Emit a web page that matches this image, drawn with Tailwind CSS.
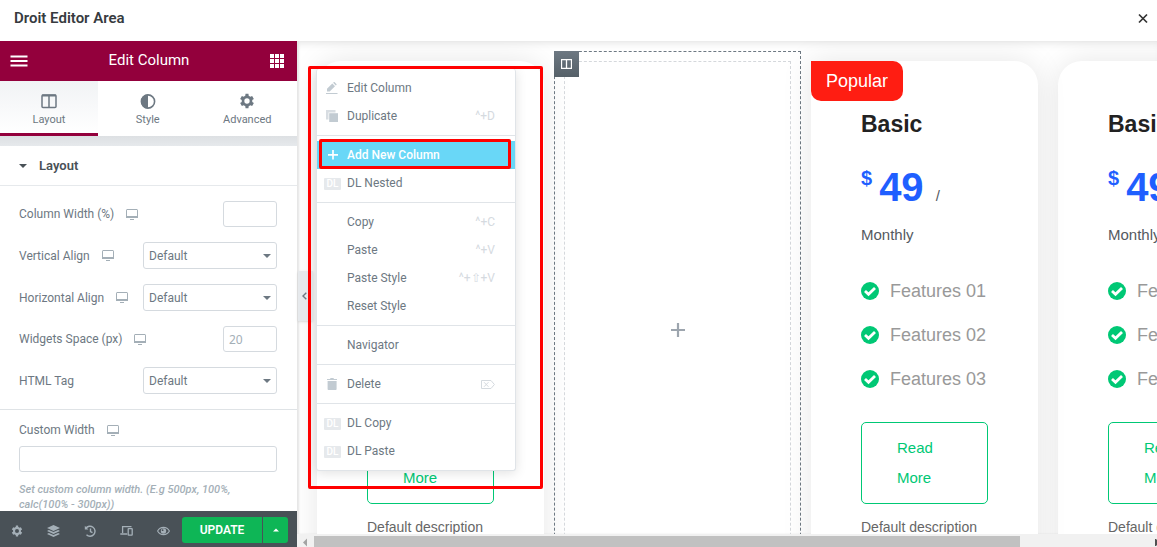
<!DOCTYPE html>
<html lang="en">
<head>
<meta charset="utf-8">
<meta name="viewport" content="width=device-width, initial-scale=1">
<title>Droit Editor Area</title>
<script src="https://cdn.jsdelivr.net/npm/@tailwindcss/browser@4"></script>
</head>
<body class="h-screen overflow-hidden bg-white font-['Roboto',sans-serif] text-xs text-[#6d7882]">
<svg class="hidden">
  <symbol id="monitor" viewBox="0 0 12 11"><path d="M1 .5h10a.6.6 0 0 1 .5.6v6.9H.5V1.100A.6.6 0 0 1 1 .5z" fill="none" stroke="currentColor"/><path d="M0 7h12v2H0zM4 10h4v1H4z" fill="currentColor"/></symbol>
  <symbol id="caret" viewBox="0 0 8 4"><path d="M0 0h8L4 4z" fill="currentColor"/></symbol>
  <symbol id="gear" viewBox="0 0 24 24"><path fill="currentColor" d="M19.800 13.500a8 8 0 0 0 0-3l2.500-1.500-2.600-4.600-2.700 1.200a8 8 0 0 0-2.500-1.500L14.200 1H9.800l-.4 3.100A8 8 0 0 0 7 5.600L4.300 4.400 1.700 9l2.500 1.500a8 8 0 0 0 0 3L1.700 15l2.600 4.600L7 18.400a8 8 0 0 0 2.500 1.500l.3 3.100h4.400l.3-3.100a8 8 0 0 0 2.500-1.500l2.700 1.200 2.600-4.600zM12 16a4 4 0 1 1 0-8 4 4 0 0 1 0 8z"/></symbol>
  <symbol id="check" viewBox="0 0 18 18"><circle cx="9" cy="9" r="9" fill="#00c875"/><path d="M4 9l3.500 3.300L14 6" fill="none" stroke="#fff" stroke-width="2.800"/></symbol>
</svg>

<div class="flex h-full flex-col">
  <header class="flex h-[41px] shrink-0 items-center justify-between pr-1 pl-3.5 pb-1">
    <h1 class="text-[15px] font-semibold text-[#373b3f]">Droit Editor Area</h1>
    <button type="button" aria-label="Close" class="p-1"><svg class="size-3" viewBox="0 0 12 12"><path d="M2 1.500l8 8M10 1.500l-8 8" stroke="#333" stroke-width="1.700"/></svg></button>
  </header>

  <div class="flex min-h-0 flex-1">
    <aside class="flex w-[297px] shrink-0 flex-col">
      <div class="flex h-10 shrink-0 items-center justify-between bg-[#93003c] pr-[13px] pl-2.5 text-white">
        <button type="button" aria-label="Menu"><svg class="h-3 w-[18px]" viewBox="0 0 18 12"><path d="M.5 1.500h17M.5 6h17M.5 10.500h17" stroke="#fff" stroke-width="2"/></svg></button>
        <h2 class="text-[15px]">Edit Column</h2>
        <button type="button" aria-label="Widgets"><svg class="size-3.5" viewBox="0 0 14 14" fill="#fff"><path d="M0 0h4v4H0zM5 0h4v4H5zM10 0h4v4h-4zM0 5h4v4H0zM5 5h4v4H5zM10 5h4v4h-4zM0 10h4v4H0zM5 10h4v4H5zM10 10h4v4h-4z"/></svg></button>
      </div>
      <nav class="grid h-[55px] shrink-0 grid-cols-[98px_1fr_1fr] text-[11px] leading-4">
        <button type="button" class="flex flex-col items-center gap-[3px] border-b-3 border-[#93003c] bg-gradient-to-b from-[#f1f3f5] to-white pt-3">
          <svg class="size-4" viewBox="0 0 16 16" fill="none" stroke="#6d7882"><rect x="1" y="2" width="14" height="12.500" rx="1" stroke-width="1.500"/><path d="M1 2.500h14" stroke-width="2"/><path d="M8 2v12.500" stroke-width="1.500"/></svg>Layout</button>
        <button type="button" class="flex flex-col items-center gap-[3px] pt-3">
          <svg class="size-4" viewBox="0 0 16 16"><circle cx="8" cy="8.500" r="6.600" fill="none" stroke="#6d7882" stroke-width="1.600"/><path d="M8 1.500v14a7 7 0 0 1 0-14z" fill="#6d7882"/></svg>Style</button>
        <button type="button" class="flex flex-col items-center gap-[3px] pt-3"><svg class="size-4"><use href="#gear"/></svg>Advanced</button>
      </nav>
      <div class="h-2.5 shrink-0 bg-gradient-to-b from-[#dde0e3] to-[#e6e9ec]"></div>

      <div class="min-h-0 flex-1 overflow-hidden">
        <button type="button" class="flex h-10 w-full items-center gap-3 border-b border-[#e6e9ec] pl-[19px] text-[13px] font-semibold text-[#495157]"><svg class="h-1 w-2"><use href="#caret"/></svg>Layout</button>
        <div class="flex flex-col gap-[15px] border-b border-[#dfe3e6] py-[15px] pr-5 pl-[19px]">
          <div class="flex items-center"><label for="cw">Column Width (%)</label><svg class="ml-3 h-[11px] w-3 text-[#a4afb7]"><use href="#monitor"/></svg>
            <input id="cw" type="text" class="ml-auto h-[26px] w-[54px] rounded-[3px] border border-[#d5dadf] px-1.5 outline-none"></div>
          <div class="flex items-center"><label for="va">Vertical Align</label><svg class="ml-3 h-[11px] w-3 text-[#a4afb7]"><use href="#monitor"/></svg>
            <span class="relative ml-auto"><select id="va" class="block h-[27px] w-[134px] appearance-none rounded-[3px] border border-[#d5dadf] px-[5px] outline-none"><option>Default</option></select><svg class="pointer-events-none absolute top-3 right-1.5 h-1 w-2"><use href="#caret"/></svg></span></div>
          <div class="flex items-center"><label for="ha">Horizontal Align</label><svg class="ml-3 h-[11px] w-3 text-[#a4afb7]"><use href="#monitor"/></svg>
            <span class="relative ml-auto"><select id="ha" class="block h-[27px] w-[134px] appearance-none rounded-[3px] border border-[#d5dadf] px-[5px] outline-none"><option>Default</option></select><svg class="pointer-events-none absolute top-3 right-1.5 h-1 w-2"><use href="#caret"/></svg></span></div>
          <div class="flex items-center"><label for="ws">Widgets Space (px)</label><svg class="ml-3 h-[11px] w-3 text-[#a4afb7]"><use href="#monitor"/></svg>
            <input id="ws" type="text" placeholder="20" class="ml-auto h-[26px] w-[54px] rounded-[3px] border border-[#d5dadf] px-[5px] font-['Noto_Sans',sans-serif] outline-none placeholder:text-[#a4afb7]"></div>
          <div class="flex items-center"><label for="ht">HTML Tag</label>
            <span class="relative ml-auto"><select id="ht" class="block h-[27px] w-[134px] appearance-none rounded-[3px] border border-[#d5dadf] px-[5px] outline-none"><option>Default</option></select><svg class="pointer-events-none absolute top-3 right-1.5 h-1 w-2"><use href="#caret"/></svg></span></div>
        </div>
        <div class="pt-3 pr-5 pl-[19px]">
          <div class="flex items-center"><label for="cu">Custom Width</label><svg class="ml-3 h-[11px] w-3 text-[#a4afb7]"><use href="#monitor"/></svg></div>
          <input id="cu" type="text" class="mt-2 block h-[26px] w-full rounded-[3px] border border-[#d5dadf] px-1.5 outline-none">
          <p class="mt-2.5 text-[11px] leading-[15px] font-medium text-[#a4afb7] italic">Set custom column width. (E.g 500px, 100%, calc(100% - 300px))</p>
        </div>
      </div>

      <footer class="flex h-9 shrink-0 items-center bg-[#495157] pr-[9px] text-[#a4afb7]">
        <div class="flex flex-1 items-center justify-between pr-3 pl-[11px] pt-1">
          <button type="button" aria-label="Settings"><svg class="block size-3"><use href="#gear"/></svg></button>
          <button type="button" aria-label="Navigator"><svg class="block h-3 w-[13px]" viewBox="0 0 13 12" fill="currentColor"><path d="M6.500 0L13 3 6.500 6 0 3zM1.800 4.900L6.500 7.100l4.700-2.200L13 5.900 6.500 9 0 5.900zM1.800 7.900l4.700 2.200 4.700-2.200L13 8.900 6.500 12 0 8.900z"/></svg></button>
          <button type="button" aria-label="History"><svg class="block size-3" viewBox="0 0 12 12" fill="none" stroke="currentColor" stroke-width="1.400"><path d="M1.800 3.500A5 5 0 1 1 2.500 9.800M6.500 3.500v3l2 1.200"/><path d="M.8.800v3.600h3.600z" fill="currentColor" stroke="none"/></svg></button>
          <button type="button" aria-label="Responsive mode"><svg class="block h-3 w-[13px]" viewBox="0 0 13 12" fill="none" stroke="currentColor" stroke-width="1.300"><path d="M11.500 1.600H2.600V8M.3 9h6.900"/><rect x="8.200" y="3.600" width="4" height="6.500" rx=".4"/></svg></button>
          <button type="button" aria-label="Preview"><svg class="block h-3 w-[13px]" viewBox="0 0 13 12"><path d="M.6 6c2.700-4.800 9.100-4.800 11.800 0C9.700 10.800 3.300 10.800.6 6z" fill="none" stroke="currentColor" stroke-width="1.100"/><circle cx="6.500" cy="6" r="2.700" fill="currentColor"/><circle cx="5.600" cy="5.200" r=".9" fill="#495157"/></svg></button>
        </div>
        <div class="mt-px flex gap-px">
          <button type="button" class="h-[26px] w-20 rounded-l-[3px] bg-[#0eb656] font-semibold text-white">UPDATE</button>
          <button type="button" aria-label="Save options" class="flex h-[26px] w-[25px] items-center justify-center rounded-r-[3px] bg-[#0eb656] text-white"><svg class="h-1 w-1.5 rotate-180" viewBox="0 0 8 4"><path d="M0 0h8L4 4z" fill="currentColor"/></svg></button>
        </div>
      </footer>
    </aside>

    <div class="relative flex min-w-0 flex-1 flex-col">
      <main class="relative flex min-h-0 flex-1 overflow-hidden bg-white pt-2.5 pl-2.5 font-['Liberation_Sans',Arial,sans-serif] shadow-[inset_0_8px_8px_-6px_#e4e4e4,inset_2px_0_2px_#e8e8e8]">
        <section class="w-[247px] shrink-0 p-2.5">
          <article class="h-[520px] rounded-t-[24px] bg-white px-[50px] pt-[50px] shadow-[0_0_30px_rgba(0,0,0,0.1)]">
            <div class="h-[311px]"></div>
            <a href="#" class="block rounded-[5px] border border-[#00c875] px-[35px] py-2.5 text-[15px] leading-[30px] text-[#00c875]">Read More</a>
            <p class="mt-[11px] text-sm leading-6 whitespace-nowrap text-[#666]">Default description</p>
          </article>
        </section>
        <section class="relative h-[560px] w-[247px] shrink-0 border border-dashed border-[#6d7882] p-[9px]">
          <div class="flex h-full justify-center border border-dashed border-[#d5d8dc] pt-[260px]">
            <button type="button" aria-label="Add widget" class="size-4 self-start"><svg class="block size-4" viewBox="0 0 16 16"><path d="M8 1v14M1 8h14" stroke="#9da5ae" stroke-width="2.200"/></svg></button>
          </div>
          <button type="button" aria-label="Edit column" class="absolute -top-px -left-px flex h-[26px] w-[25px] items-center justify-center bg-gradient-to-b from-[#6d7882] to-[#556068]"><svg class="h-2.5 w-[11px]" viewBox="0 0 11 10" fill="none" stroke="#fff"><path d="M.5.5h10v9H.5zM5.500.5v9" stroke-width="1.300"/></svg></button>
        </section>
        <section class="w-[247px] shrink-0 p-2.5">
          <article class="relative h-[520px] rounded-tr-[24px] bg-white px-[50px] pt-[50px] shadow-[0_0_30px_rgba(0,0,0,0.1)]">
            <span class="absolute top-0 left-0 rounded-tr-[10px] rounded-b-[10px] bg-[#ff1d12] px-[15px] text-lg leading-10 text-white">Popular</span>
            <h3 class="text-[23px] leading-[26px] font-bold text-[#222]">Basic</h3>
            <div class="mt-7 flex h-11 gap-[7px]"><span class="mt-px text-xl leading-6 font-bold text-[#1f5fff]">$</span><span class="flex items-baseline gap-3"><b class="text-[40px] leading-11 text-[#1f5fff]">49</b><span class="text-[15px] text-[#54595f]">/</span></span></div>
            <p class="mt-[15px] text-[15px] leading-[22px] text-[#54595f]">Monthly</p>
            <ul class="mt-[33px] mb-[31px] flex flex-col gap-5 text-lg leading-6 whitespace-nowrap text-[#999]">
              <li class="flex items-center gap-[11px]"><svg class="size-[18px] shrink-0"><use href="#check"/></svg>Features 01</li>
              <li class="flex items-center gap-[11px]"><svg class="size-[18px] shrink-0"><use href="#check"/></svg>Features 02</li>
              <li class="flex items-center gap-[11px]"><svg class="size-[18px] shrink-0"><use href="#check"/></svg>Features 03</li>
            </ul>
            <a href="#" class="block rounded-[5px] border border-[#00c875] px-[35px] py-2.5 text-[15px] leading-[30px] text-[#00c875]">Read More</a>
            <p class="mt-[11px] text-sm leading-6 whitespace-nowrap text-[#666]">Default description</p>
          </article>
        </section>
        <section class="w-[247px] shrink-0 p-2.5">
          <article class="h-[520px] rounded-t-[24px] bg-white px-[50px] pt-[50px] shadow-[0_0_30px_rgba(0,0,0,0.1)]">
            <h3 class="text-[23px] leading-[26px] font-bold text-[#222]">Basic</h3>
            <div class="mt-7 flex h-11 gap-[7px]"><span class="mt-px text-xl leading-6 font-bold text-[#1f5fff]">$</span><span class="flex items-baseline gap-3"><b class="text-[40px] leading-11 text-[#1f5fff]">49</b><span class="text-[15px] text-[#54595f]">/</span></span></div>
            <p class="mt-[15px] text-[15px] leading-[22px] text-[#54595f]">Monthly</p>
            <ul class="mt-[33px] mb-[31px] flex flex-col gap-5 text-lg leading-6 whitespace-nowrap text-[#999]">
              <li class="flex items-center gap-[11px]"><svg class="size-[18px] shrink-0"><use href="#check"/></svg>Features 01</li>
              <li class="flex items-center gap-[11px]"><svg class="size-[18px] shrink-0"><use href="#check"/></svg>Features 02</li>
              <li class="flex items-center gap-[11px]"><svg class="size-[18px] shrink-0"><use href="#check"/></svg>Features 03</li>
            </ul>
            <a href="#" class="block rounded-[5px] border border-[#00c875] px-[35px] py-2.5 text-[15px] leading-[30px] text-[#00c875]">Read More</a>
            <p class="mt-[11px] text-sm leading-6 whitespace-nowrap text-[#666]">Default description</p>
          </article>
        </section>
      </main>
      <div class="flex h-[13px] shrink-0 bg-[#f1f1f1] pt-0.5">
        <svg class="h-[11px] w-[17px] shrink-0" viewBox="0 0 17 11"><path d="M10 2.500v8l-4-4z" fill="#a3a3a3"/></svg>
        <div class="flex-1"><div class="h-full w-[84%] bg-[#c1c1c1]"></div></div>
        <svg class="h-[11px] w-0.5 shrink-0" viewBox="0 0 2 11"><path d="M0 3h1l1 1v5l-1 1H0z" fill="#505050"/></svg>
      </div>

      <button type="button" aria-label="Collapse panel" class="absolute top-[230px] left-px flex h-[50px] w-[15px] items-center bg-[#e6e9ec] pl-1 shadow-sm"><svg class="h-2 w-[5px]" viewBox="0 0 5 8"><path d="M4.300.8L1 4l3.300 3.200" fill="none" stroke="#6d7882" stroke-width="1.400"/></svg></button>

      <div role="menu" class="absolute top-7 left-[19px] w-[200px] divide-y divide-[#e0e4e8] rounded-[3px] border-x border-b border-[#e0e4e8] bg-white text-xs shadow-[0_2px_12px_rgba(0,0,0,0.12)]">
        <div class="py-[5px]">
          <button type="button" role="menuitem" class="flex h-7 w-full items-center pr-5 pl-[9px]"><svg class="mr-[9px] h-3 w-3" viewBox="0 0 12 12" fill="#c2cbd2"><path d="M1 9.500V6.800L6.300 1.500l2.700 2.700-5.300 5.300zM7.100.8l.6-.6c.3-.3.7-.3 1 0l1.700 1.700c.3.300.3.700 0 1l-.6.600zM0 11h11.500v1H0z"/></svg>Edit Column</button>
          <button type="button" role="menuitem" class="flex h-7 w-full items-center pr-5 pl-[9px]"><svg class="mr-[9px] h-3 w-3" viewBox="0 0 12 12"><path d="M0 0h9.500v2.500H2.500v7H0z" fill="#d8dde2"/><path d="M3.200 3.200H12V12H3.200z" fill="#c2cbd2"/></svg>Duplicate<span class="ml-auto text-[#d5dadf]">^+D</span></button>
        </div>
        <div class="py-[5px]">
          <button type="button" role="menuitem" class="flex h-7 w-full items-center bg-[#69d7f7] pr-5 pl-2.5 font-medium text-white"><svg class="mr-2 h-3 w-3" viewBox="0 0 12 12"><path d="M6 1v9.500M1 5.800h10" stroke="#fff" stroke-width="1.700"/></svg>Add New Column</button>
          <button type="button" role="menuitem" class="flex h-7 w-full items-center gap-1.5 pr-5 pl-[7px]"><span class="mt-0.5 flex h-3 w-[17px] items-center justify-center rounded-[1px] bg-[#e6e9ec] text-[10px] font-medium text-white">DL</span>DL Nested</button>
        </div>
        <div class="py-[5px]">
          <button type="button" role="menuitem" class="flex h-7 w-full items-center pr-5 pl-[30px]">Copy<span class="ml-auto text-[#d5dadf]">^+C</span></button>
          <button type="button" role="menuitem" class="flex h-7 w-full items-center pr-5 pl-[30px]">Paste<span class="ml-auto text-[#d5dadf]">^+V</span></button>
          <button type="button" role="menuitem" class="flex h-7 w-full items-center pr-5 pl-[30px]">Paste Style<span class="ml-auto text-[#d5dadf]">^+⇧+V</span></button>
          <button type="button" role="menuitem" class="flex h-7 w-full items-center pr-5 pl-[30px]">Reset Style</button>
        </div>
        <div class="py-[5px]">
          <button type="button" role="menuitem" class="flex h-7 w-full items-center pr-5 pl-[30px]">Navigator</button>
        </div>
        <div class="py-[5px]">
          <button type="button" role="menuitem" class="flex h-7 w-full items-center pr-5 pl-[9px]"><svg class="mr-[9px] h-3 w-3" viewBox="0 0 12 12" fill="#c2cbd2"><path d="M1 1h3l.6-1h2.800L8 1h3v1H1zM1.600 3h9v8.300a.8.8 0 0 1-.8.700H2.400a.8.8 0 0 1-.8-.7z"/></svg>Delete<svg class="ml-auto h-[9px] w-[14px]" viewBox="0 0 14 9" fill="none" stroke="#d5dadf"><path d="M.5.5h9.500l3.400 4-3.400 4H.5zM3 2.200l4.500 4.600M7.500 2.200L3 6.800"/></svg></button>
        </div>
        <div class="py-[5px]">
          <button type="button" role="menuitem" class="flex h-7 w-full items-center gap-1.5 pr-5 pl-[7px]"><span class="mt-0.5 flex h-3 w-[17px] items-center justify-center rounded-[1px] bg-[#e6e9ec] text-[10px] font-medium text-white">DL</span>DL Copy</button>
          <button type="button" role="menuitem" class="flex h-7 w-full items-center gap-1.5 pr-5 pl-[7px]"><span class="mt-0.5 flex h-3 w-[17px] items-center justify-center rounded-[1px] bg-[#e6e9ec] text-[10px] font-medium text-white">DL</span>DL Paste</button>
        </div>
      </div>
      <div class="pointer-events-none absolute top-[25px] left-[11px] h-[423px] w-[235px] rounded-[2px] border-3 border-[#f00]"></div>
      <div class="pointer-events-none absolute top-[98px] left-[22px] h-[30px] w-[192px] rounded-[2px] border-3 border-[#f00]"></div>
    </div>
  </div>
</div>
</body>
</html>
